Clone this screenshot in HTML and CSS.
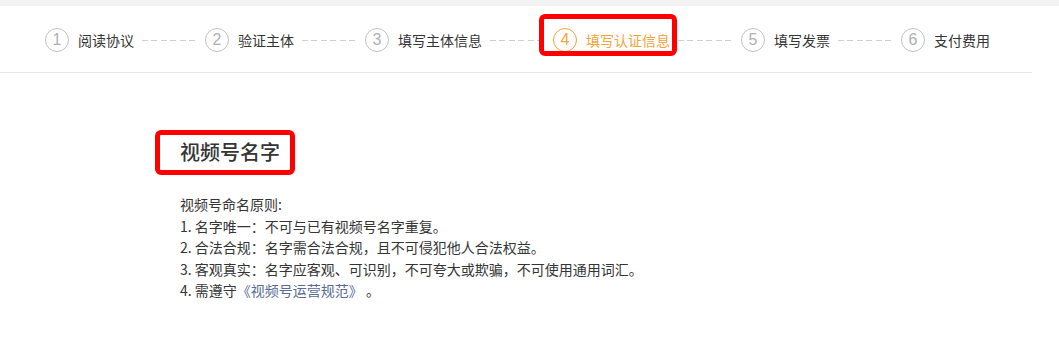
FILE: index.html
```html
<!DOCTYPE html>
<html lang="zh-CN">
<head>
<meta charset="utf-8">
<title>填写认证信息</title>
<link rel="stylesheet" href="styles.css">
</head>
<body>
<div class="topband"></div>
<header class="steps">
  <div class="step"><span class="num">1</span><span class="label">阅读协议</span></div>
  <span class="dash"></span>
  <div class="step"><span class="num">2</span><span class="label">验证主体</span></div>
  <span class="dash"></span>
  <div class="step"><span class="num">3</span><span class="label">填写主体信息</span></div>
  <span class="dash"></span>
  <div class="step active"><span class="num">4</span><span class="label">填写认证信息</span><span class="mark mark-step"></span></div>
  <span class="dash"></span>
  <div class="step"><span class="num">5</span><span class="label">填写发票</span></div>
  <span class="dash"></span>
  <div class="step"><span class="num">6</span><span class="label">支付费用</span></div>
</header>
<main class="content">
  <h2 class="title">视频号名字<span class="mark mark-title"></span></h2>
  <div class="rules">
    <p>视频号命名原则:</p>
    <p>1. 名字唯一：不可与已有视频号名字重复。</p>
    <p>2. 合法合规：名字需合法合规，且不可侵犯他人合法权益。</p>
    <p>3. 客观真实：名字应客观、可识别，不可夸大或欺骗，不可使用通用词汇。</p>
    <p>4. 需遵守<a class="link" href="#">《视频号运营规范》</a>&nbsp;。</p>
  </div>
</main>
</body>
</html>
```

FILE: styles.css
```css
* { box-sizing: border-box; }
html, body {
  margin: 0;
  padding: 0;
  background: #fff;
  font-family: "Noto Sans CJK SC", "Noto Sans", sans-serif;
  color: #353535;
}
.topband {
  height: 6px;
  background: #f2f2f2;
}
.steps {
  width: 1032px;
  height: 67px;
  border-bottom: 1px solid #e6e6e6;
  display: flex;
  align-items: center;
  padding-left: 45px;
  padding-top: 2px;
}
.step {
  position: relative;
  display: flex;
  align-items: center;
}
.num {
  width: 24px;
  height: 24px;
  border: 1px solid #c2c2c2;
  border-radius: 50%;
  display: flex;
  align-items: center;
  justify-content: center;
  font-family: "Liberation Sans", sans-serif;
  font-size: 16px;
  color: #b0b0b0;
  line-height: 1;
}
.label {
  margin-left: 9px;
  font-size: 14px;
  line-height: 20px;
  color: #353535;
}
.dash {
  width: 55px;
  height: 1px;
  margin: 0 8px;
  background: repeating-linear-gradient(to right, #cfcfcf 0, #cfcfcf 6px, transparent 6px, transparent 9.4px);
}
.active .num {
  border-color: #f3a43a;
  color: #f3a43a;
}
.active .label {
  color: #f3a43a;
}
.mark {
  position: absolute;
  border: 5px solid #ff0000;
  border-radius: 6px;
  pointer-events: none;
}
.mark-step {
  left: -14px;
  right: -7px;
  top: -14px;
  bottom: -4px;
}
.content {
  padding-left: 180px;
  padding-top: 65px;
}
.title {
  position: relative;
  display: inline-block;
  margin: 0;
  font-size: 20px;
  font-weight: 500;
  line-height: 28px;
  color: #353535;
}
.mark-title {
  left: -25px;
  right: -15px;
  top: -8px;
  bottom: -9px;
}
.rules {
  margin-top: 28px;
  font-size: 14px;
  line-height: 21.5px;
  color: #353535;
}
.rules p {
  margin: 0;
}
.link {
  color: #576b95;
  text-decoration: none;
}
```
